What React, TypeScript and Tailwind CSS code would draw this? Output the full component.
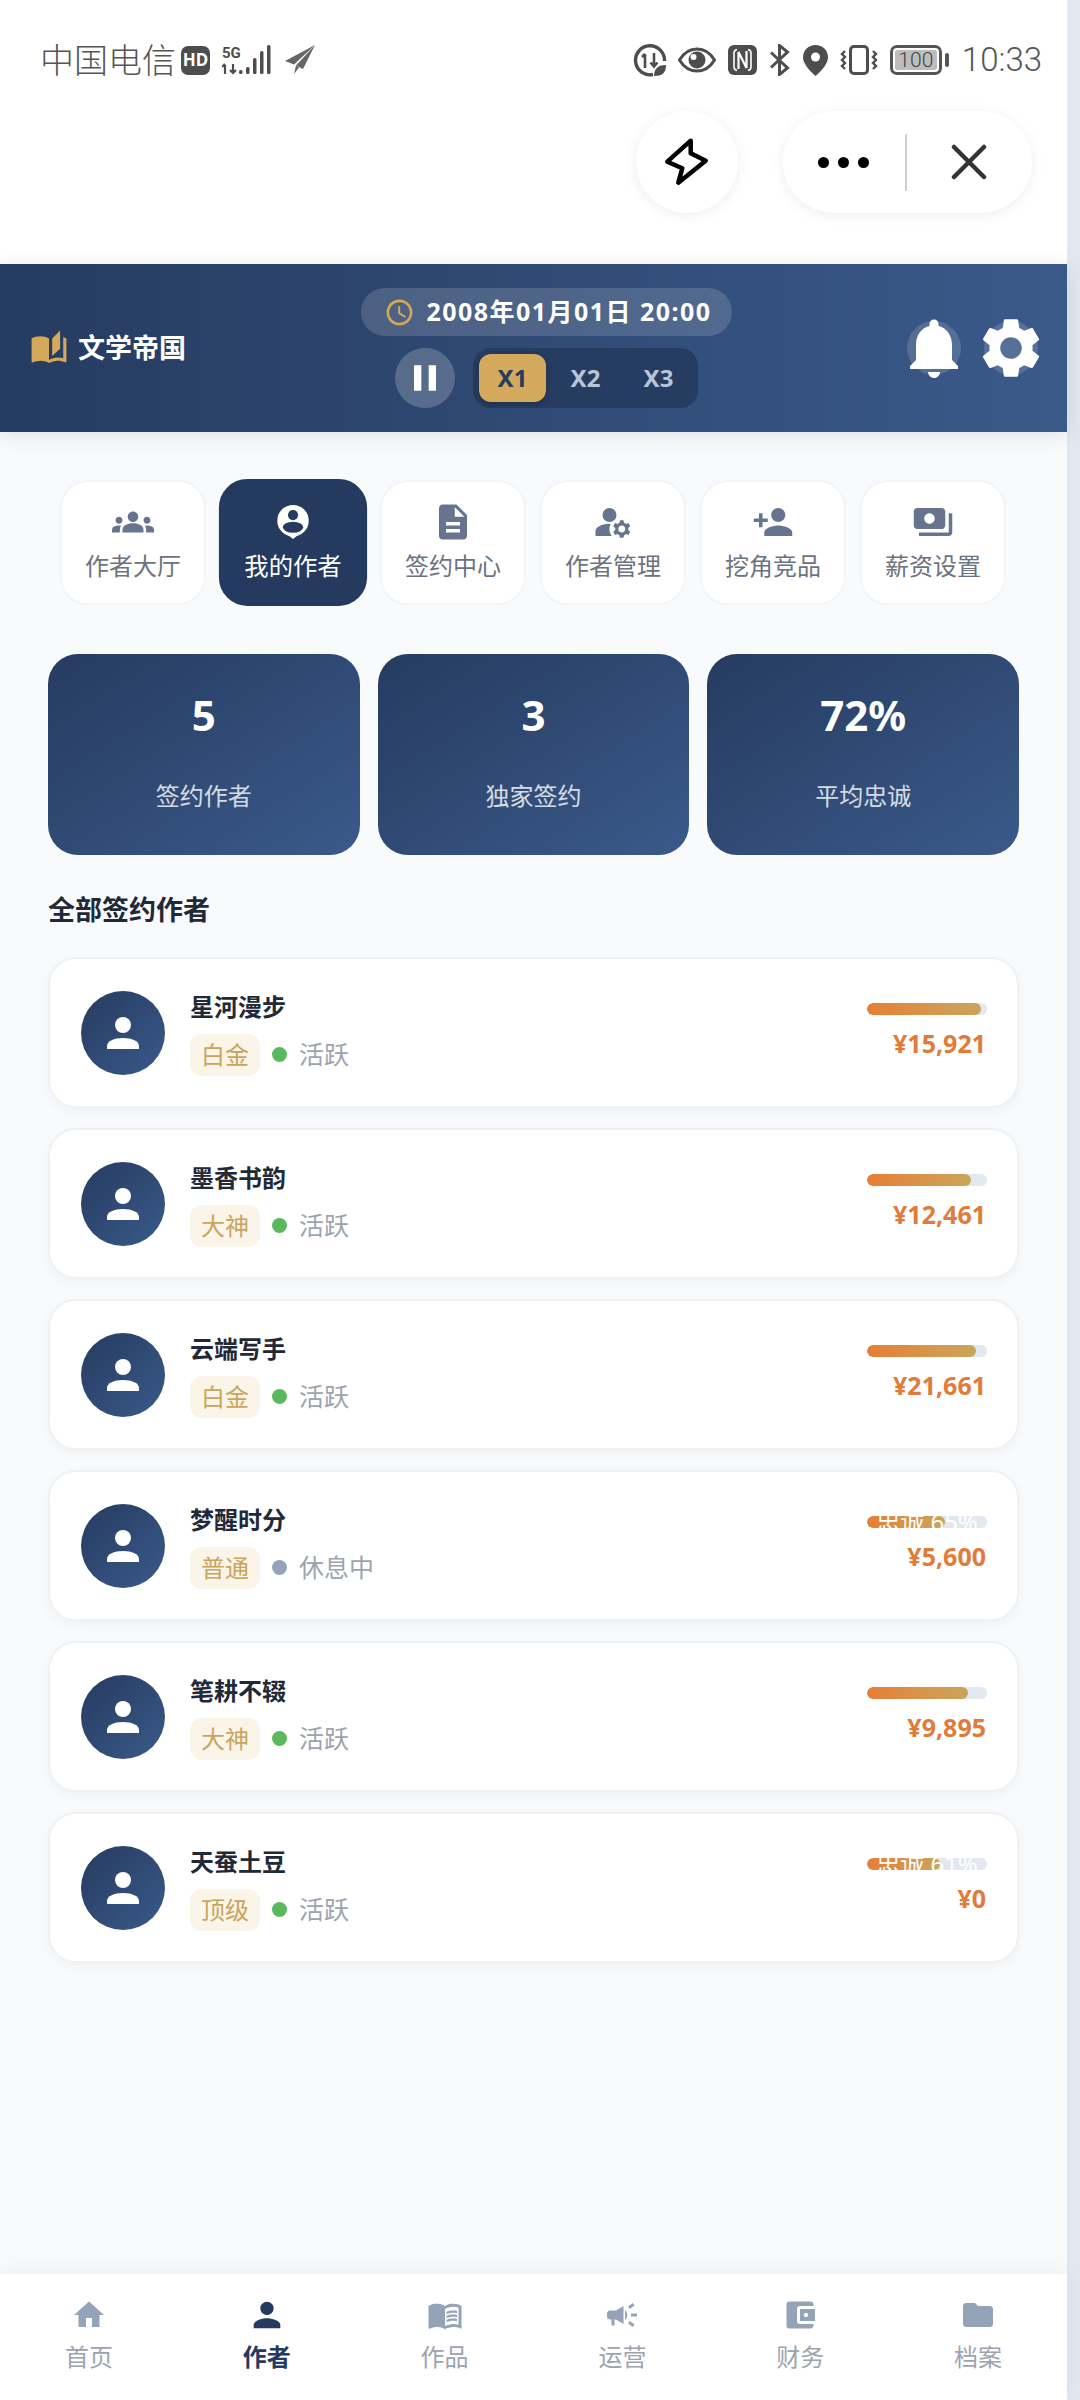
import { IconType } from "react-icons";
import {
  MdAccountBalanceWallet,
  MdAutoStories,
  MdCampaign,
  MdDescription,
  MdFolder,
  MdGroups,
  MdHome,
  MdManageAccounts,
  MdMenuBook,
  MdNotifications,
  MdOutlineSchedule,
  MdPause,
  MdPayments,
  MdPerson,
  MdPersonAdd,
  MdSettings,
} from "react-icons/md";

const TABS: { label: string; icon: IconType | null; active?: boolean }[] = [
  { label: "作者大厅", icon: MdGroups },
  { label: "我的作者", icon: null, active: true },
  { label: "签约中心", icon: MdDescription },
  { label: "作者管理", icon: MdManageAccounts },
  { label: "挖角竞品", icon: MdPersonAdd },
  { label: "薪资设置", icon: MdPayments },
];

const STATS = [
  { value: "5", label: "签约作者" },
  { value: "3", label: "独家签约" },
  { value: "72%", label: "平均忠诚" },
];

const AUTHORS = [
  { name: "星河漫步", level: "白金", status: "活跃", online: true, pay: "¥15,921", pct: 95 },
  { name: "墨香书韵", level: "大神", status: "活跃", online: true, pay: "¥12,461", pct: 87 },
  { name: "云端写手", level: "白金", status: "活跃", online: true, pay: "¥21,661", pct: 91 },
  { name: "梦醒时分", level: "普通", status: "休息中", online: false, pay: "¥5,600", pct: 65, barText: "忠诚 65%" },
  { name: "笔耕不辍", level: "大神", status: "活跃", online: true, pay: "¥9,895", pct: 84 },
  { name: "天蚕土豆", level: "顶级", status: "活跃", online: true, pay: "¥0", pct: 61, barText: "忠诚 61%" },
];

const NAV: { label: string; icon: IconType; active?: boolean }[] = [
  { label: "首页", icon: MdHome },
  { label: "作者", icon: MdPerson, active: true },
  { label: "作品", icon: MdMenuBook },
  { label: "运营", icon: MdCampaign },
  { label: "财务", icon: MdAccountBalanceWallet },
  { label: "档案", icon: MdFolder },
];

// 状态栏图标
function StatusBar() {
  return (
    <div className="flex h-[48px] items-center justify-between pl-[40px] pr-[25px] text-[#555555]">
      <div className="flex items-center">
        <span className="text-[34px] font-light leading-[48px]">中国电信</span>
        <span className="ml-[5px] flex h-[29px] w-[29px] items-center justify-center rounded-[7px] bg-[#4d4d4d] text-[17px] font-bold text-white">
          HD
        </span>
        <svg className="ml-[12px]" width="50" height="30" viewBox="0 0 50 30" fill="#4d4d4d">
          <text x="0" y="13" fontSize="15" fontWeight="700" fontFamily="Liberation Sans Narrow, Roboto, sans-serif">5G</text>
          <path d="M3 20v9M0 22l3-3M11 19v8M8 25l3 3 3-3" stroke="#4d4d4d" strokeWidth="2.2" fill="none" />
          <rect x="17" y="25" width="3.5" height="4" rx="1.5" />
          <rect x="24" y="22" width="3.5" height="7" rx="1.5" />
          <rect x="31" y="13" width="3.5" height="16" rx="1.5" />
          <rect x="38" y="6" width="3.5" height="23" rx="1.5" />
          <rect x="45" y="0" width="3.5" height="29" rx="1.5" />
        </svg>
        <svg className="ml-[13px]" width="30" height="30" viewBox="0 0 30 30" fill="#666666">
          <path d="M30 0 0 16l9 3.5L30 0Z" />
          <path d="M30 0 11 20.5l7 3.5L30 0Z" />
          <path d="M11 20.5 9 29l5-6.5-3-2Z" />
        </svg>
      </div>
      <div className="flex items-center">
        <svg width="34" height="33" viewBox="0 0 34 33" fill="none" stroke="#4d4d4d">
          <path d="M20 30.5A14.5 14.5 0 1 1 31.5 17" strokeWidth="3.4" />
          <path d="M12 10v14M9 13l3-3M21 9v13M17.5 18.5l3.5 4 3.5-4" strokeWidth="2.6" />
          <path d="M21 32c0-8 5-11 12-11 0 8-4 11-12 11Z" fill="#4d4d4d" stroke="none" />
        </svg>
        <svg className="ml-[11px]" width="38" height="26" viewBox="0 0 38 26" fill="#4d4d4d">
          <path d="M1.5 13C6 5.5 12 2 19 2s13 3.5 17.5 11C32 20.5 26 24 19 24S6 20.5 1.5 13Z" fill="none" stroke="#4d4d4d" strokeWidth="3" />
          <circle cx="19" cy="13" r="8.5" />
          <circle cx="15.5" cy="10" r="3" fill="#ffffff" />
        </svg>
        <svg className="ml-[12px]" width="29" height="30" viewBox="0 0 29 30">
          <rect width="29" height="30" rx="6" fill="#4d4d4d" />
          <path d="M9 4.5C7 5 6 6 6 8v14c0 2 1 3 3 3.5M20 4.5c2 .5 3 1.5 3 3.5v14c0 2-1 3-3 3.5" fill="none" stroke="#ffffff" strokeWidth="1.6" />
          <path d="M10.5 24V7l8 16V6" fill="none" stroke="#ffffff" strokeWidth="2.2" />
        </svg>
        <svg className="ml-[12px]" width="21" height="32" viewBox="0 0 21 32" fill="none" stroke="#4d4d4d" strokeWidth="3">
          <path d="M2 8.5 18.5 24 10.5 30.5V1.5L18.5 8 2 23.5" />
        </svg>
        <svg className="ml-[13px]" width="25" height="31" viewBox="0 0 25 31">
          <path d="M12.5 0C5.6 0 0 5.4 0 12.3 0 21 12.5 31 12.5 31S25 21 25 12.3C25 5.4 19.4 0 12.5 0Z" fill="#4d4d4d" />
          <circle cx="12.5" cy="12" r="4.5" fill="#ffffff" />
        </svg>
        <svg className="ml-[12px]" width="38" height="30" viewBox="0 0 38 30" fill="none" stroke="#4d4d4d">
          <rect x="10.5" y="1.5" width="17" height="27" rx="3.5" strokeWidth="3" />
          <path d="M5 6 2 9l3 3-3 3 3 3-3 3 3 3M33 6l3 3-3 3 3 3-3 3 3 3-3 3" strokeWidth="2.4" />
        </svg>
        <div className="ml-[12px] flex items-center">
          <div className="h-[30px] w-[52px] rounded-[7px] border-[3px] border-[#555555] p-[2px]">
            <div className="flex h-full items-center justify-center rounded-[2px] bg-[#bdbdbd] font-['Roboto',sans-serif] text-[21px] font-light leading-none text-[#444444]">
              100
            </div>
          </div>
          <div className="ml-[3px] h-[14px] w-[4px] rounded-[2px] bg-[#555555]" />
        </div>
        <span className="ml-[13px] font-['Roboto',sans-serif] text-[33px] font-light leading-[48px]">10:33</span>
      </div>
    </div>
  );
}

function Capsule() {
  return (
    <div className="mt-[27px] flex justify-end gap-[45px] pr-[35px]">
      <div className="flex h-[102px] w-[102px] items-center justify-center rounded-full bg-white shadow-[0_2px_14px_rgba(0,0,0,0.07)]">
        <svg width="46" height="50" viewBox="0 0 46 50" fill="none" stroke="#000000" strokeWidth="4.5" strokeLinejoin="round">
          <path d="M26.7 3.7 3.3 24.7l15 6.6-4 14.4 27.4-22-15-7.4 0-12.6Z" />
        </svg>
      </div>
      <div className="flex h-[102px] w-[249px] items-center rounded-full bg-white pl-[35px] shadow-[0_2px_14px_rgba(0,0,0,0.07)]">
        <div className="flex gap-[9px]">
          <span className="h-[11px] w-[11px] rounded-full bg-black" />
          <span className="h-[11px] w-[11px] rounded-full bg-black" />
          <span className="h-[11px] w-[11px] rounded-full bg-black" />
        </div>
        <div className="ml-[36px] h-[57px] w-[2px] bg-[#cfcfcf]" />
        <svg className="ml-[44px]" width="36" height="36" viewBox="0 0 36 36" stroke="#333333" strokeWidth="4.5" strokeLinecap="round">
          <path d="M3 3l30 30M33 3 3 33" />
        </svg>
      </div>
    </div>
  );
}

function Header() {
  return (
    <div className="relative z-10 flex h-[168px] items-center justify-between bg-gradient-to-r from-[#263b60] to-[#3a5a8a] pl-[30px] pr-[29px] shadow-[0_4px_20px_rgba(0,0,0,0.1)]">
      <div className="flex items-center gap-[10px]">
        <MdAutoStories className="text-[#d4a95c]" size={38} />
        <span className="text-[27px] font-bold text-white">文学帝国</span>
      </div>

      <div className="flex flex-col items-center gap-[12px]">
        <div className="flex h-[48px] items-center gap-[12px] rounded-[24px] bg-white/15 pl-[23px] pr-[21px]">
          <MdOutlineSchedule className="text-[#d4a95c]" size={31} />
          <span className="text-[25px] font-bold tracking-[1.45px] text-white">2008年01月01日 20:00</span>
        </div>
        <div className="flex items-center gap-[18px]">
          <div className="flex h-[60px] w-[60px] items-center justify-center rounded-full bg-white/20">
            <MdPause className="text-white" size={44} />
          </div>
          <div className="flex h-[60px] gap-[6px] rounded-[18px] bg-[#263c60] p-[6px]">
            <div className="flex w-[67px] items-center justify-center rounded-[12px] bg-[#d4a95c] text-[24px] font-bold text-[#263b60] shadow-[0_2px_6px_rgba(0,0,0,0.2)]">
              X1
            </div>
            <div className="flex w-[67px] items-center justify-center text-[24px] font-bold text-[#b8c4d8]">X2</div>
            <div className="flex w-[67px] items-center justify-center text-[24px] font-bold text-[#b8c4d8]">X3</div>
          </div>
        </div>
      </div>

      <div className="flex gap-[23px]">
        <div className="flex h-[54px] w-[54px] items-center justify-center rounded-full bg-white/15">
          <MdNotifications className="shrink-0 text-white" size={72} />
        </div>
        <div className="flex h-[54px] w-[54px] items-center justify-center rounded-full bg-white/15">
          <MdSettings className="shrink-0 text-white" size={72} />
        </div>
      </div>
    </div>
  );
}

// 「我的作者」选中态图标
function PinPersonIcon() {
  return (
    <svg width="42" height="42" viewBox="0 0 42 42">
      <circle cx="21" cy="20" r="15.5" fill="#ffffff" />
      <path d="M13 32h16l-8 6-8-6Z" fill="#ffffff" />
      <circle cx="21" cy="14.5" r="5" fill="#243a5f" />
      <ellipse cx="21" cy="26.5" rx="10" ry="5.5" fill="#243a5f" />
    </svg>
  );
}

function TabBar() {
  return (
    <div className="flex gap-[14px] px-[12px]">
      {TABS.map((tab) => (
        <div
          key={tab.label}
          className={
            tab.active
              ? "flex h-[125px] w-[146px] scale-[1.015] flex-col items-center rounded-[28px] border-2 border-[#243a5f] bg-[#243a5f] pt-[19px] text-white"
              : "flex h-[125px] w-[146px] flex-col items-center rounded-[28px] border-2 border-[#f1f5f9] bg-white pt-[19px] text-[#6b7280]"
          }
        >
          {tab.icon ? <tab.icon className="text-[#667490]" size={42} /> : <PinPersonIcon />}
          <span className="mt-[5px] text-[24px] leading-[36px]">{tab.label}</span>
        </div>
      ))}
    </div>
  );
}

function AuthorCard({ author }: { author: (typeof AUTHORS)[number] }) {
  return (
    <div className="flex h-[151px] items-center rounded-[28px] border-2 border-[#eef2f6] bg-white pl-[31px] pr-[30px] shadow-[0_4px_12px_rgba(0,0,0,0.04)]">
      <div className="flex h-[84px] w-[84px] items-center justify-center rounded-full bg-gradient-to-br from-[#263b60] to-[#3a5a8a]">
        <svg width="32" height="32" viewBox="0 0 32 32" fill="#ffffff">
          <circle cx="16" cy="8" r="8" />
          <path d="M0 32v-3c0-5 7-8 16-8s16 3 16 8v3H0Z" />
        </svg>
      </div>
      <div className="ml-[25px]">
        <div className="text-[24px] font-bold leading-[34px] text-[#1f2937]">{author.name}</div>
        <div className="mt-[10px] flex items-center">
          <span className="flex h-[42px] items-center rounded-[12px] bg-[#faf4e9] px-[11px] text-[24px] text-[#c9a55c]">
            {author.level}
          </span>
          <span className={author.online ? "ml-[12px] h-[15px] w-[15px] rounded-full bg-[#5cb85c]" : "ml-[12px] h-[15px] w-[15px] rounded-full bg-[#94a3b8]"} />
          <span className="ml-[12px] text-[25px] text-[#9ca3af]">{author.status}</span>
        </div>
      </div>
      <div className="ml-auto flex flex-col items-end">
        <div className="relative h-[12px] w-[120px] overflow-hidden rounded-full bg-[#e2e8f0]">
          <div className="h-full rounded-full bg-gradient-to-r from-[#e67e33] to-[#c9a55c]" style={{ width: `${author.pct}%` }} />
          {author.barText && (
            <span className="absolute inset-0 flex items-center justify-center whitespace-nowrap text-[24px] leading-[12px] text-white">
              {author.barText}
            </span>
          )}
        </div>
        <div className="mt-[10px] pr-[1px] text-[25px] font-bold leading-[37px] text-[#e07b39]">{author.pay}</div>
      </div>
    </div>
  );
}

function BottomNav() {
  return (
    <div className="relative z-10 flex h-[126px] bg-white pt-[23px] shadow-[0_-4px_20px_rgba(0,0,0,0.05)]">
      {NAV.map((item) => (
        <div key={item.label} className="flex flex-1 flex-col items-center">
          <div className="flex h-[36px] items-center justify-center">
            <item.icon className={item.active ? "text-[#243a5f]" : "text-[#94a3b8]"} size={item.active ? 40 : 36} />
          </div>
          <span className={item.active ? "mt-[6px] text-[24px] font-bold leading-[36px] text-[#243a5f]" : "mt-[6px] text-[24px] leading-[36px] text-[#9ca3af]"}>
            {item.label}
          </span>
        </div>
      ))}
    </div>
  );
}

export default function App() {
  return (
    <div className="flex h-[2400px] w-[1080px] overflow-hidden bg-[#e2e8f0] font-['Noto_Sans','Noto_Sans_CJK_SC',sans-serif]">
      <div className="flex w-[1067px] flex-col bg-[#f8fafc]">
        <div className="h-[264px] bg-white pt-[36px]">
          <StatusBar />
          <Capsule />
        </div>
        <Header />

        <div className="flex-1 px-[48px] pt-[48px]">
          <TabBar />
          <div className="mt-[49px] grid grid-cols-3 gap-[18px]">
            {STATS.map((s) => (
              <div key={s.label} className="flex h-[201px] flex-col items-center rounded-[30px] bg-gradient-to-br from-[#263b60] to-[#3a5a8a] pt-[31px]">
                <span className="text-[42px] font-bold leading-[60px] text-white">{s.value}</span>
                <span className="mt-[33px] text-[24px] leading-[36px] text-white/80">{s.label}</span>
              </div>
            ))}
          </div>
          <h2 className="mb-[27px] mt-[35px] text-[27px] font-bold leading-[40px] text-[#1f2937]">全部签约作者</h2>
          <div className="flex flex-col gap-[20px]">
            {AUTHORS.map((a) => (
              <AuthorCard key={a.name} author={a} />
            ))}
          </div>
        </div>

        <BottomNav />
      </div>
    </div>
  );
}
